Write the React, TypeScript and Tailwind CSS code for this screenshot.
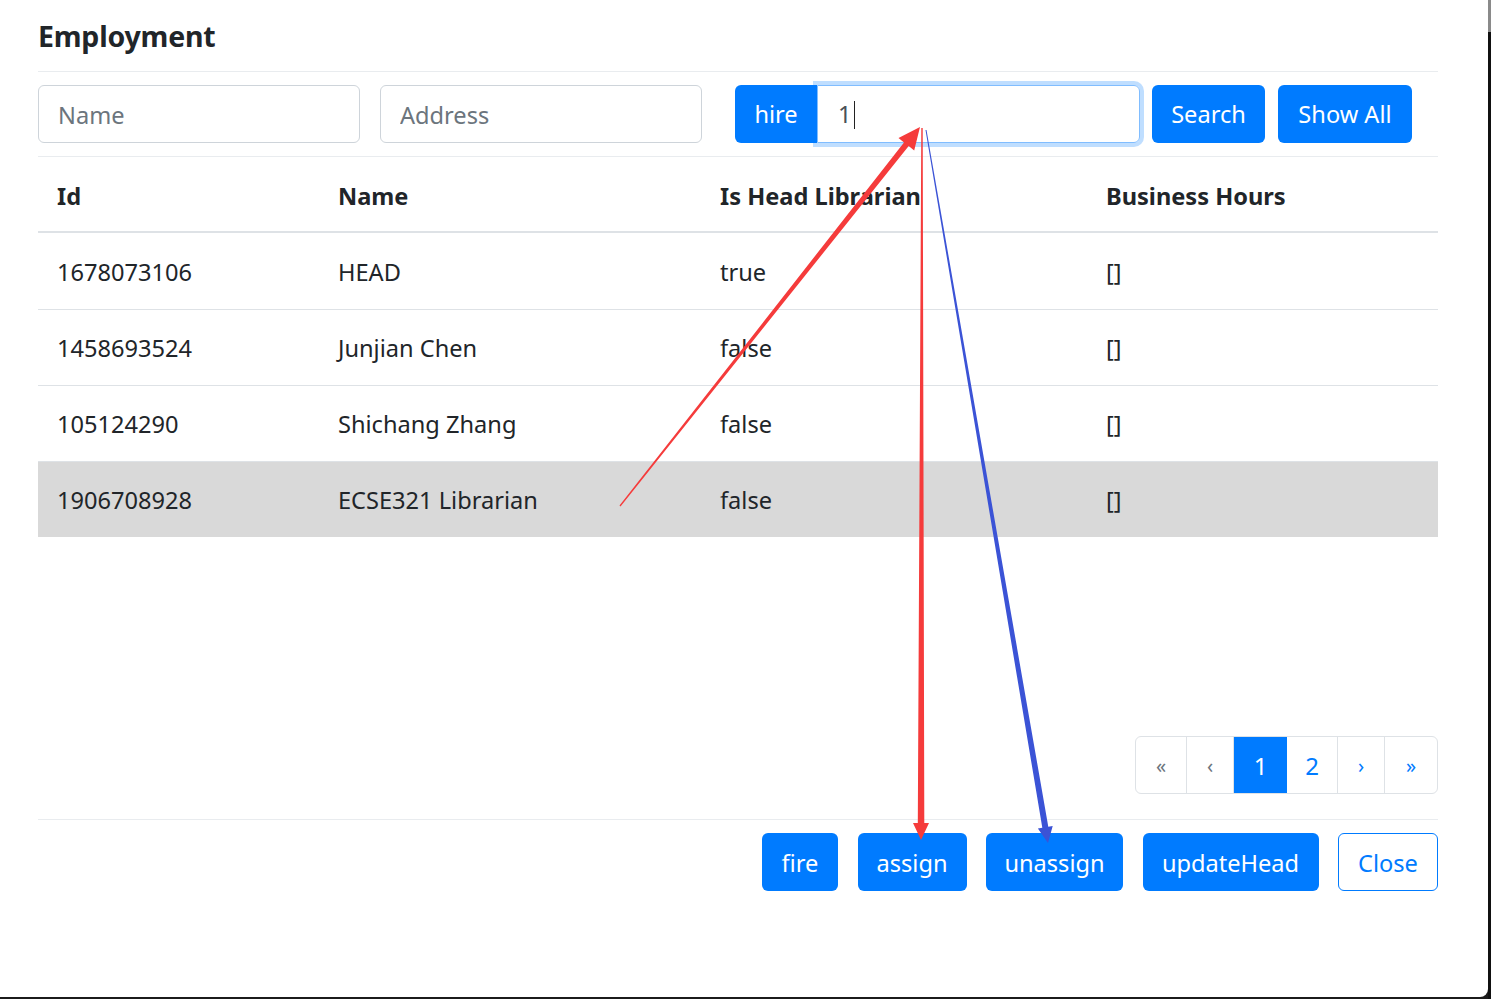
import React from "react";

type Pt = [number, number];

function taperedArrow(from: Pt, tip: Pt, w0: number, w1: number, headLen: number, headHalf: number) {
  const dx = tip[0] - from[0];
  const dy = tip[1] - from[1];
  const len = Math.hypot(dx, dy);
  const ux = dx / len;
  const uy = dy / len;
  const px = -uy;
  const py = ux;
  const bx = tip[0] - ux * headLen;
  const by = tip[1] - uy * headLen;
  const pts: Pt[] = [
    [from[0] + px * w0 / 2, from[1] + py * w0 / 2],
    [bx + px * w1 / 2, by + py * w1 / 2],
    [bx + px * headHalf, by + py * headHalf],
    [tip[0], tip[1]],
    [bx - px * headHalf, by - py * headHalf],
    [bx - px * w1 / 2, by - py * w1 / 2],
    [from[0] - px * w0 / 2, from[1] - py * w0 / 2],
  ];
  return pts.map((p) => `${p[0].toFixed(1)},${p[1].toFixed(1)}`).join(" ");
}

const rows = [
  { id: "1678073106", name: "HEAD", head: "true", hours: "[]" },
  { id: "1458693524", name: "Junjian Chen", head: "false", hours: "[]" },
  { id: "105124290", name: "Shichang Zhang", head: "false", hours: "[]" },
  { id: "1906708928", name: "ECSE321 Librarian", head: "false", hours: "[]" },
];

const font = { fontFamily: '"Noto Sans", "Open Sans", Arial, sans-serif' };

export default function App() {
  return (
    <div className="relative flex h-[999px] w-[1491px] overflow-hidden bg-[#1b1b1b]" style={font}>
      <div className="flex h-[997px] w-[1488px] flex-col rounded-br-[8px] bg-white pl-[38px] text-[#212529]">
        <div className="w-[1400px]">
          {/* Header */}
          <div className="flex h-[72px] items-center border-b border-[#e9ecef] pt-[2px]">
            <h5 className="text-[28.5px] font-bold leading-none tracking-[-0.2px]">Employment</h5>
          </div>
          {/* Search row */}
          <div className="flex h-[85px] items-center border-b border-[#e9ecef] text-[23.6px]">
            <input
              readOnly
              placeholder="Name"
              className="h-[58px] w-[322px] rounded-[6px] border border-[#ced4da] px-[19px] pt-[2px] placeholder:text-[#6c757d] outline-none"
            />
            <input
              readOnly
              placeholder="Address"
              className="ml-[20px] h-[58px] w-[322px] rounded-[6px] border border-[#ced4da] px-[19px] pt-[2px] placeholder:text-[#6c757d] outline-none"
            />
            <div className="ml-[33px] flex h-[58px] items-stretch">
              <button className="w-[82px] rounded-l-[6px] bg-[#007bff] pt-[2px] text-white">hire</button>
              <div className="flex w-[323px] items-center rounded-r-[6px] border border-[#80bdff] pl-[20px] pt-[2px] text-[#495057] shadow-[0_0_0_4px_rgba(0,123,255,0.25)]">
                <span>1</span>
                <span className="ml-[2px] h-[28px] w-[1.5px] bg-[#222]" />
              </div>
            </div>
            <button className="ml-[12px] h-[58px] w-[113px] rounded-[6px] bg-[#007bff] pt-[2px] text-white">Search</button>
            <button className="ml-[13px] h-[58px] w-[134px] rounded-[6px] bg-[#007bff] pt-[2px] text-white">Show All</button>
          </div>
          {/* Table */}
          <div className="grid grid-cols-[281px_382px_386px_351px] border-b-2 border-[#dee2e6] text-[23.6px] font-bold">
            <div className="flex h-[74px] items-center px-[19px] pt-[5px]">Id</div>
            <div className="flex h-[74px] items-center px-[19px] pt-[5px]">Name</div>
            <div className="flex h-[74px] items-center px-[19px] pt-[5px]">Is Head Librarian</div>
            <div className="flex h-[74px] items-center px-[19px] pt-[5px]">Business Hours</div>
          </div>
          {rows.map((r, i) => (
            <div
              key={r.id}
              className={`grid h-[76px] grid-cols-[281px_382px_386px_351px] text-[23.6px] ${i > 0 ? "border-t border-[#dee2e6] pt-[2px]" : "pt-[4px]"} ${i === 3 ? "bg-[#d9d9d9]" : ""}`}
            >
              <div className="flex items-center px-[19px]">{r.id}</div>
              <div className="flex items-center px-[19px]">{r.name}</div>
              <div className="flex items-center px-[19px]">{r.head}</div>
              <div className="flex items-center px-[19px]">{r.hours}</div>
            </div>
          ))}
          {/* Pagination */}
          <div className="mt-[199px] flex justify-end">
            <div className="flex h-[58px] overflow-hidden rounded-[6px] border border-[#dee2e6]">
              <div className="flex w-[51px] items-center justify-center border-r border-[#dee2e6] pt-[2px] text-[20px] text-[#6c757d]">«</div>
              <div className="flex w-[47px] items-center justify-center border-r border-[#dee2e6] pt-[2px] text-[20px] text-[#6c757d]">‹</div>
              <div className="flex w-[53px] items-center justify-center bg-[#007bff] pt-[2px] text-[24px] text-white">1</div>
              <div className="flex w-[51px] items-center justify-center border-r border-[#dee2e6] pt-[2px] text-[24px] text-[#007bff]">2</div>
              <div className="flex w-[47px] items-center justify-center border-r border-[#dee2e6] pt-[2px] text-[20px] text-[#007bff]">›</div>
              <div className="flex w-[52px] items-center justify-center pt-[2px] text-[20px] text-[#007bff]">»</div>
            </div>
          </div>
          {/* Footer */}
          <div className="mt-[25px] flex h-[72px] items-end justify-end border-t border-[#e9ecef] text-[23.6px]">
            <div className="flex gap-[19.5px]">
              <button className="h-[58px] w-[76px] rounded-[6px] bg-[#007bff] pt-[4px] text-white">fire</button>
              <button className="h-[58px] w-[109px] rounded-[6px] bg-[#007bff] pt-[4px] text-white">assign</button>
              <button className="h-[58px] w-[137px] rounded-[6px] bg-[#007bff] pt-[4px] text-white">unassign</button>
              <button className="h-[58px] w-[176px] rounded-[6px] bg-[#007bff] pt-[4px] text-white">updateHead</button>
              <button className="h-[58px] w-[100px] rounded-[6px] border border-[#007bff] bg-white pt-[4px] text-[#007bff]">Close</button>
            </div>
          </div>
        </div>
      </div>
      <div className="flex w-[3px] flex-col">
        <div className="h-[32px] bg-[#8a8a8a]" />
        <div className="flex-1 bg-[#111]" />
      </div>
      {/* annotation arrows */}
      <svg className="pointer-events-none absolute left-0 top-0" width="1491" height="999" viewBox="0 0 1491 999">
        <polygon points={taperedArrow([620, 506], [920, 127], 1.2, 6, 22, 10)} fill="#f53b3b" />
        <polygon points={taperedArrow([922, 128], [921, 840], 1.5, 6.5, 17, 8)} fill="#f53b3b" />
        <polygon points={taperedArrow([926, 130], [1048, 843], 1, 6, 16, 7.5)} fill="#3b53d6" />
      </svg>
    </div>
  );
}
